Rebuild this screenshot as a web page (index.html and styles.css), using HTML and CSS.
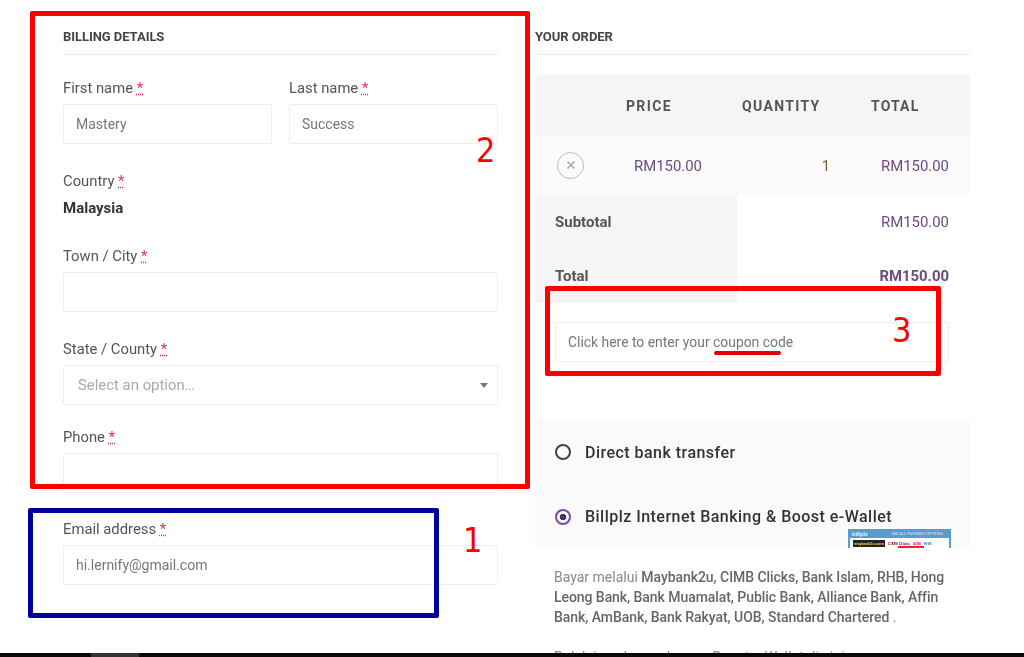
FILE: index.html
```html
<!DOCTYPE html>
<html lang="en">
<head>
<meta charset="utf-8">
<title>Checkout</title>
<link rel="stylesheet" href="styles.css">
</head>
<body>
<main class="page">
  <section class="billing">
    <h3 class="section-title">Billing details</h3>
    <div class="name-row">
      <div class="field">
        <label class="label">First name <abbr class="req" title="required">*</abbr></label>
        <div class="input">Mastery</div>
      </div>
      <div class="field">
        <label class="label">Last name <abbr class="req" title="required">*</abbr></label>
        <div class="input">Success</div>
      </div>
    </div>
    <div class="country">
      <label class="label">Country <abbr class="req" title="required">*</abbr></label>
      <strong class="country-value">Malaysia</strong>
    </div>
    <div class="field town">
      <label class="label">Town / City <abbr class="req" title="required">*</abbr></label>
      <div class="input"></div>
    </div>
    <div class="field state">
      <label class="label">State / County <abbr class="req" title="required">*</abbr></label>
      <div class="input select"><span>Select an option…</span><i class="caret"></i></div>
    </div>
    <div class="field phone">
      <label class="label">Phone <abbr class="req" title="required">*</abbr></label>
      <div class="input"></div>
    </div>
    <div class="field email">
      <label class="label">Email address <abbr class="req" title="required">*</abbr></label>
      <div class="input">hi.lernify@gmail.com</div>
    </div>
  </section>

  <section class="order">
    <h3 class="section-title">Your order</h3>
    <table class="order-table">
      <colgroup><col class="c1"><col class="c2"><col class="c3"><col class="c4"></colgroup>
      <thead>
        <tr>
          <th></th>
          <th class="h-price">Price</th>
          <th class="h-qty">Quantity</th>
          <th class="h-total">Total</th>
        </tr>
      </thead>
      <tbody>
        <tr class="item">
          <td class="remove-cell">
            <span class="remove"><svg viewBox="0 0 10 10" width="10" height="10"><path d="M1.5 1.5l7 7M8.5 1.5l-7 7"/></svg></span>
          </td>
          <td class="money v-price">RM150.00</td>
          <td class="v-qty">1</td>
          <td class="money v-total">RM150.00</td>
        </tr>
      </tbody>
      <tfoot>
        <tr>
          <th colspan="2" class="foot-label">Subtotal</th>
          <td colspan="2" class="money v-total">RM150.00</td>
        </tr>
        <tr>
          <th colspan="2" class="foot-label">Total</th>
          <td colspan="2" class="money v-total grand">RM150.00</td>
        </tr>
      </tfoot>
    </table>
    <div class="coupon">Click here to enter your coupon code</div>
    <div class="payment">
      <div class="pay-row">
        <span class="radio"></span>
        <span class="pay-name">Direct bank transfer</span>
      </div>
      <div class="pay-row selected">
        <span class="radio"></span>
        <span class="pay-name">Billplz Internet Banking &amp; Boost e-Wallet</span>
        <div class="thumb">
          <div class="thumb-top"><b>billplz</b><span>SEE ALL PAYMENT OPTIONS</span></div>
          <div class="thumb-body">
            <span class="t-may">maybank2u.com</span>
            <span class="t-cimb">CIMB Clicks</span>
            <span class="t-uob">UOB</span>
            <span class="t-rhb">RHB</span>
            <span class="t-red"></span>
          </div>
        </div>
      </div>
    </div>
    <p class="pay-desc">Bayar melalui <strong>Maybank2u, CIMB Clicks, Bank Islam, RHB, Hong Leong Bank, Bank Muamalat, Public Bank, Alliance Bank, Affin Bank, AmBank, Bank Rakyat, UOB, Standard Chartered</strong> .</p>
    <p class="pay-desc cut">Boleh juga bayar dengan Boost e-Wallet di sini</p>
  </section>
</main>
<div class="bottom-bar"><span class="bar-tab"></span></div>

<div class="mark red box-two"></div>
<div class="mark blue box-one"></div>
<div class="mark red box-three"></div>
<span class="coupon-line"></span>
<span class="num num-two">2</span>
<span class="num num-one">1</span>
<span class="num num-three">3</span>
</body>
</html>
```
FILE: styles.css
```css
* { box-sizing: border-box; }
html, body { margin: 0; height: 657px; overflow: hidden; background: #fff; }
body { position: relative; font-family: Roboto, "Liberation Sans", sans-serif; font-size: 14px; color: #555; }

.page { display: flex; gap: 37px; height: 653px; padding-left: 63px; overflow: hidden; filter: blur(.3px); }
.billing, .order { width: 435px; flex: none; }

.section-title {
  margin: 0;
  height: 55px;
  padding-top: 30px;
  border-bottom: 1px solid #ebebeb;
  font-size: 13px;
  line-height: 14px;
  font-weight: 700;
  letter-spacing: -.05px;
  text-transform: uppercase;
  color: #444;
}

.label { display: block; height: 17px; margin-bottom: 7px; font-size: 14.8px; line-height: 17px; color: #555; }
.req { color: #e2324e; }
.input {
  height: 40px;
  padding: 0 12px;
  border: 1px solid #eee;
  border-radius: 2px;
  font-size: 14px;
  line-height: 38px;
  color: #777;
}

.name-row { display: grid; grid-template-columns: 209px 209px; gap: 17px; padding-top: 25px; }
.country { padding-top: 29px; }
.country-value { display: block; font-size: 15px; line-height: 17px; font-weight: 700; color: #333; margin-top: 10px; }
.town { padding-top: 31px; }
.state { padding-top: 29px; }
.phone { padding-top: 24px; }
.email { padding-top: 28px; }

.select { display: flex; align-items: center; justify-content: space-between; padding: 0 9px 0 14px; color: #aaa; font-size: 14.9px; }
.caret { width: 0; height: 0; border: 4px solid transparent; border-top: 5px solid #777; border-bottom: 0; }

.order-table { width: 435px; margin-top: 20px; border-collapse: collapse; table-layout: fixed; }
.c1 { width: 70px; }
.c2 { width: 132px; }
.c3 { width: 103px; }
.c4 { width: 130px; }
.order-table thead tr { height: 61px; background: #f5f5f5; }
.order-table thead th { padding: 0; text-align: left; font-size: 14px; font-weight: 700; letter-spacing: 1.35px; text-transform: uppercase; color: #555; }
.order-table thead .h-price { padding-left: 21px; }
.order-table thead .h-qty { padding-left: 5px; }
.order-table thead .h-total { padding-left: 31px; letter-spacing: 1.15px; }
.item { height: 59px; background: #fbfbfb; }
.order-table td { padding: 0; text-align: right; }
.money { color: #6d4a80; font-size: 14.9px; }
.order-table .v-price { padding-right: 35px; }
.order-table .v-qty { padding-right: 10px; font-size: 14.9px; color: #77622f; }
.order-table .v-total { padding-right: 21px; }
.grand { font-weight: 700; }
.order-table .remove-cell { text-align: left; padding-left: 22px; }
.remove { display: flex; align-items: center; justify-content: center; width: 27px; height: 27px; border: 1px solid #bbb; border-radius: 50%; }
.remove svg { fill: none; stroke: #aaa; stroke-width: 1.6; margin-top: -2px; }
.order-table tfoot tr { height: 54px; }
.foot-label { padding: 0 0 0 20px; text-align: left; background: #f5f5f5; font-size: 15px; font-weight: 700; color: #555; }

.coupon { width: 394px; height: 40px; margin: 19px 0 0 20px; padding-left: 12px; border: 1px solid #eee; border-radius: 2px; font-size: 13.9px; line-height: 38px; color: #777; }

.payment { margin-top: 58px; width: 435px; background: #fafafa; }
.pay-row { position: relative; display: flex; align-items: center; gap: 14px; height: 64px; padding-left: 20px; overflow: hidden; }
.pay-row + .pay-row { border-top: 1px solid #fff; }
.radio { width: 16px; height: 16px; flex: none; border: 2px solid #444; border-radius: 50%; }
.pay-name { font-size: 16px; font-weight: 500; letter-spacing: .47px; color: #333; }
.selected .radio { border-color: #7d4b9f; background: radial-gradient(circle, #4a3560 0 3px, transparent 3.6px); }

.thumb { position: absolute; left: 313px; top: 44px; width: 103px; height: 40px; background: #fff; border: 2px solid #5a9bd0; border-top: 0; font-size: 4px; line-height: 7px; overflow: hidden; }
.thumb-top { display: flex; justify-content: space-between; height: 9px; padding: 1px 6px 0 2px; background: #5a9bd0; color: #dceaf5; }
.thumb-top b { font-size: 6px; }
.thumb-body { display: flex; gap: 3px; align-items: center; padding: 2px 3px; font-weight: 700; font-size: 4px; }
.t-may { padding: 0 1px; background: #222; color: #e8c93a; }
.t-cimb { color: #9e2332; }
.t-uob { color: #d3232e; }
.t-rhb { color: #3a9bd5; }
.t-red { position: absolute; left: 48px; top: 17px; width: 26px; height: 4px; background: #ee2233; }

.pay-desc { margin: 19px 0 0; width: 394px; margin-left: 19px; font-size: 14px; line-height: 20px; color: #888; }
.pay-desc strong { font-weight: 500; letter-spacing: -.06px; color: #666; }
.cut { margin-top: 20px; letter-spacing: .1px; }

.bottom-bar { height: 4px; background: #0a0a0a; padding-left: 91px; }
.bar-tab { display: block; width: 48px; height: 4px; background: #333; }

.mark { position: absolute; border-style: solid; border-width: 5px; border-radius: 2px; }
.red { border-color: #ff0000; }
.blue { border-color: #00009c; }
.box-two { left: 30px; top: 11px; width: 500px; height: 478px; }
.box-one { left: 28px; top: 508px; width: 411px; height: 110px; }
.box-three { left: 545px; top: 286px; width: 396px; height: 90px; }
.coupon-line { position: absolute; left: 714px; top: 351px; width: 67px; height: 4px; border-radius: 2px; background: #e00000; }
.num { position: absolute; font-family: "DejaVu Sans Condensed", "DejaVu Sans", sans-serif; font-size: 34px; line-height: 40px; color: #f00; }
.num-two { left: 476px; top: 130px; }
.num-one { left: 463px; top: 520px; }
.num-three { left: 892px; top: 310px; }
```
